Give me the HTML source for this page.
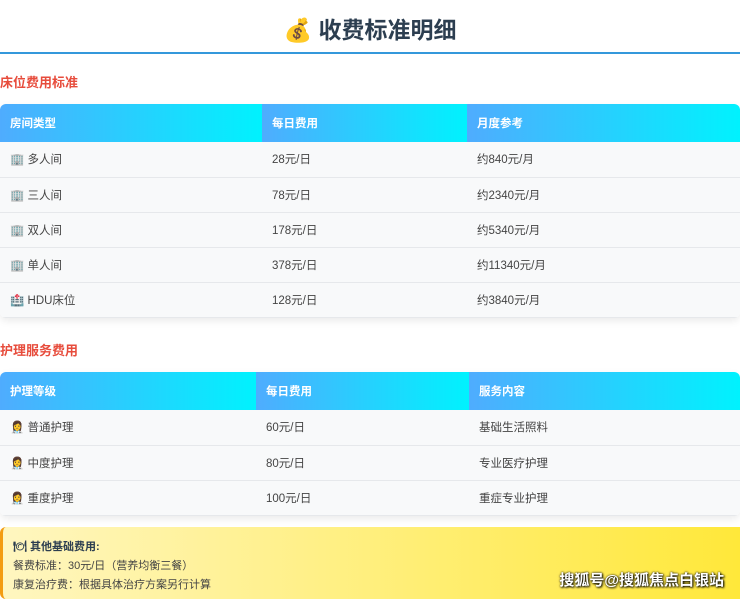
<!DOCTYPE html>
<html><head><meta charset="utf-8"><style>
*{margin:0;padding:0;box-sizing:border-box}
body{width:740px;height:596px;overflow:hidden;background:#fff;font-family:"Liberation Sans","Noto Sans CJK SC",sans-serif;color:#333;position:relative}
h1{position:absolute;top:12px;left:0;width:740px;text-align:center;font-size:23px;font-weight:bold;color:#2c3e50;line-height:36px}
.line{position:absolute;top:52px;left:0;width:740px;height:2px;background:#3498db}
.st{position:absolute;left:0;font-size:13px;font-weight:bold;color:#e74c3c}
table{position:absolute;left:0;width:740px;border-collapse:collapse;font-size:11.5px;border-radius:6px;overflow:hidden;box-shadow:0 3px 8px rgba(0,0,0,.08)}
th{height:38px;text-align:left;padding-left:10px;color:#fff;font-weight:bold;background:linear-gradient(90deg,#4facfe,#00f2fe)}
td{height:35px;padding-left:10px;background:#f8f9fa;border-bottom:1px solid #e6e8eb;color:#444}
.box{position:absolute;left:0;top:527px;width:740px;height:72px;border-left:3px solid #f39c12;border-radius:6px 0 0 6px;background:linear-gradient(90deg,#fff6c0,#ffe83a);padding:11px 0 0 10px;font-size:11px;line-height:19px;color:#444}
.wm{position:absolute;right:16px;top:569px;font-size:15px;font-weight:bold;color:#fff;text-shadow:0 0 2px #000,1px 1px 2px #000}
</style></head><body>
<h1>💰 收费标准明细</h1>
<div class="line"></div>
<div class="st" style="top:72px">床位费用标准</div>
<table style="top:104px">
<tr><th style="width:262px">房间类型</th><th style="width:205px">每日费用</th><th>月度参考</th></tr>
<tr><td>🏢 多人间</td><td>28元/日</td><td>约840元/月</td></tr>
<tr><td>🏢 三人间</td><td>78元/日</td><td>约2340元/月</td></tr>
<tr><td>🏢 双人间</td><td>178元/日</td><td>约5340元/月</td></tr>
<tr><td>🏢 单人间</td><td>378元/日</td><td>约11340元/月</td></tr>
<tr><td>🏥 HDU床位</td><td>128元/日</td><td>约3840元/月</td></tr>
</table>
<div class="st" style="top:340px">护理服务费用</div>
<table style="top:372px">
<tr><th style="width:256px">护理等级</th><th style="width:213px">每日费用</th><th>服务内容</th></tr>
<tr><td>👩‍⚕️ 普通护理</td><td>60元/日</td><td>基础生活照料</td></tr>
<tr><td>👩‍⚕️ 中度护理</td><td>80元/日</td><td>专业医疗护理</td></tr>
<tr><td>👩‍⚕️ 重度护理</td><td>100元/日</td><td>重症专业护理</td></tr>
</table>
<div class="box"><b style="color:#2c3e50">🍽 其他基础费用:</b><br>餐费标准：30元/日（营养均衡三餐）<br>康复治疗费：根据具体治疗方案另行计算</div>
<div class="wm">搜狐号@搜狐焦点白银站</div>
</body></html>
